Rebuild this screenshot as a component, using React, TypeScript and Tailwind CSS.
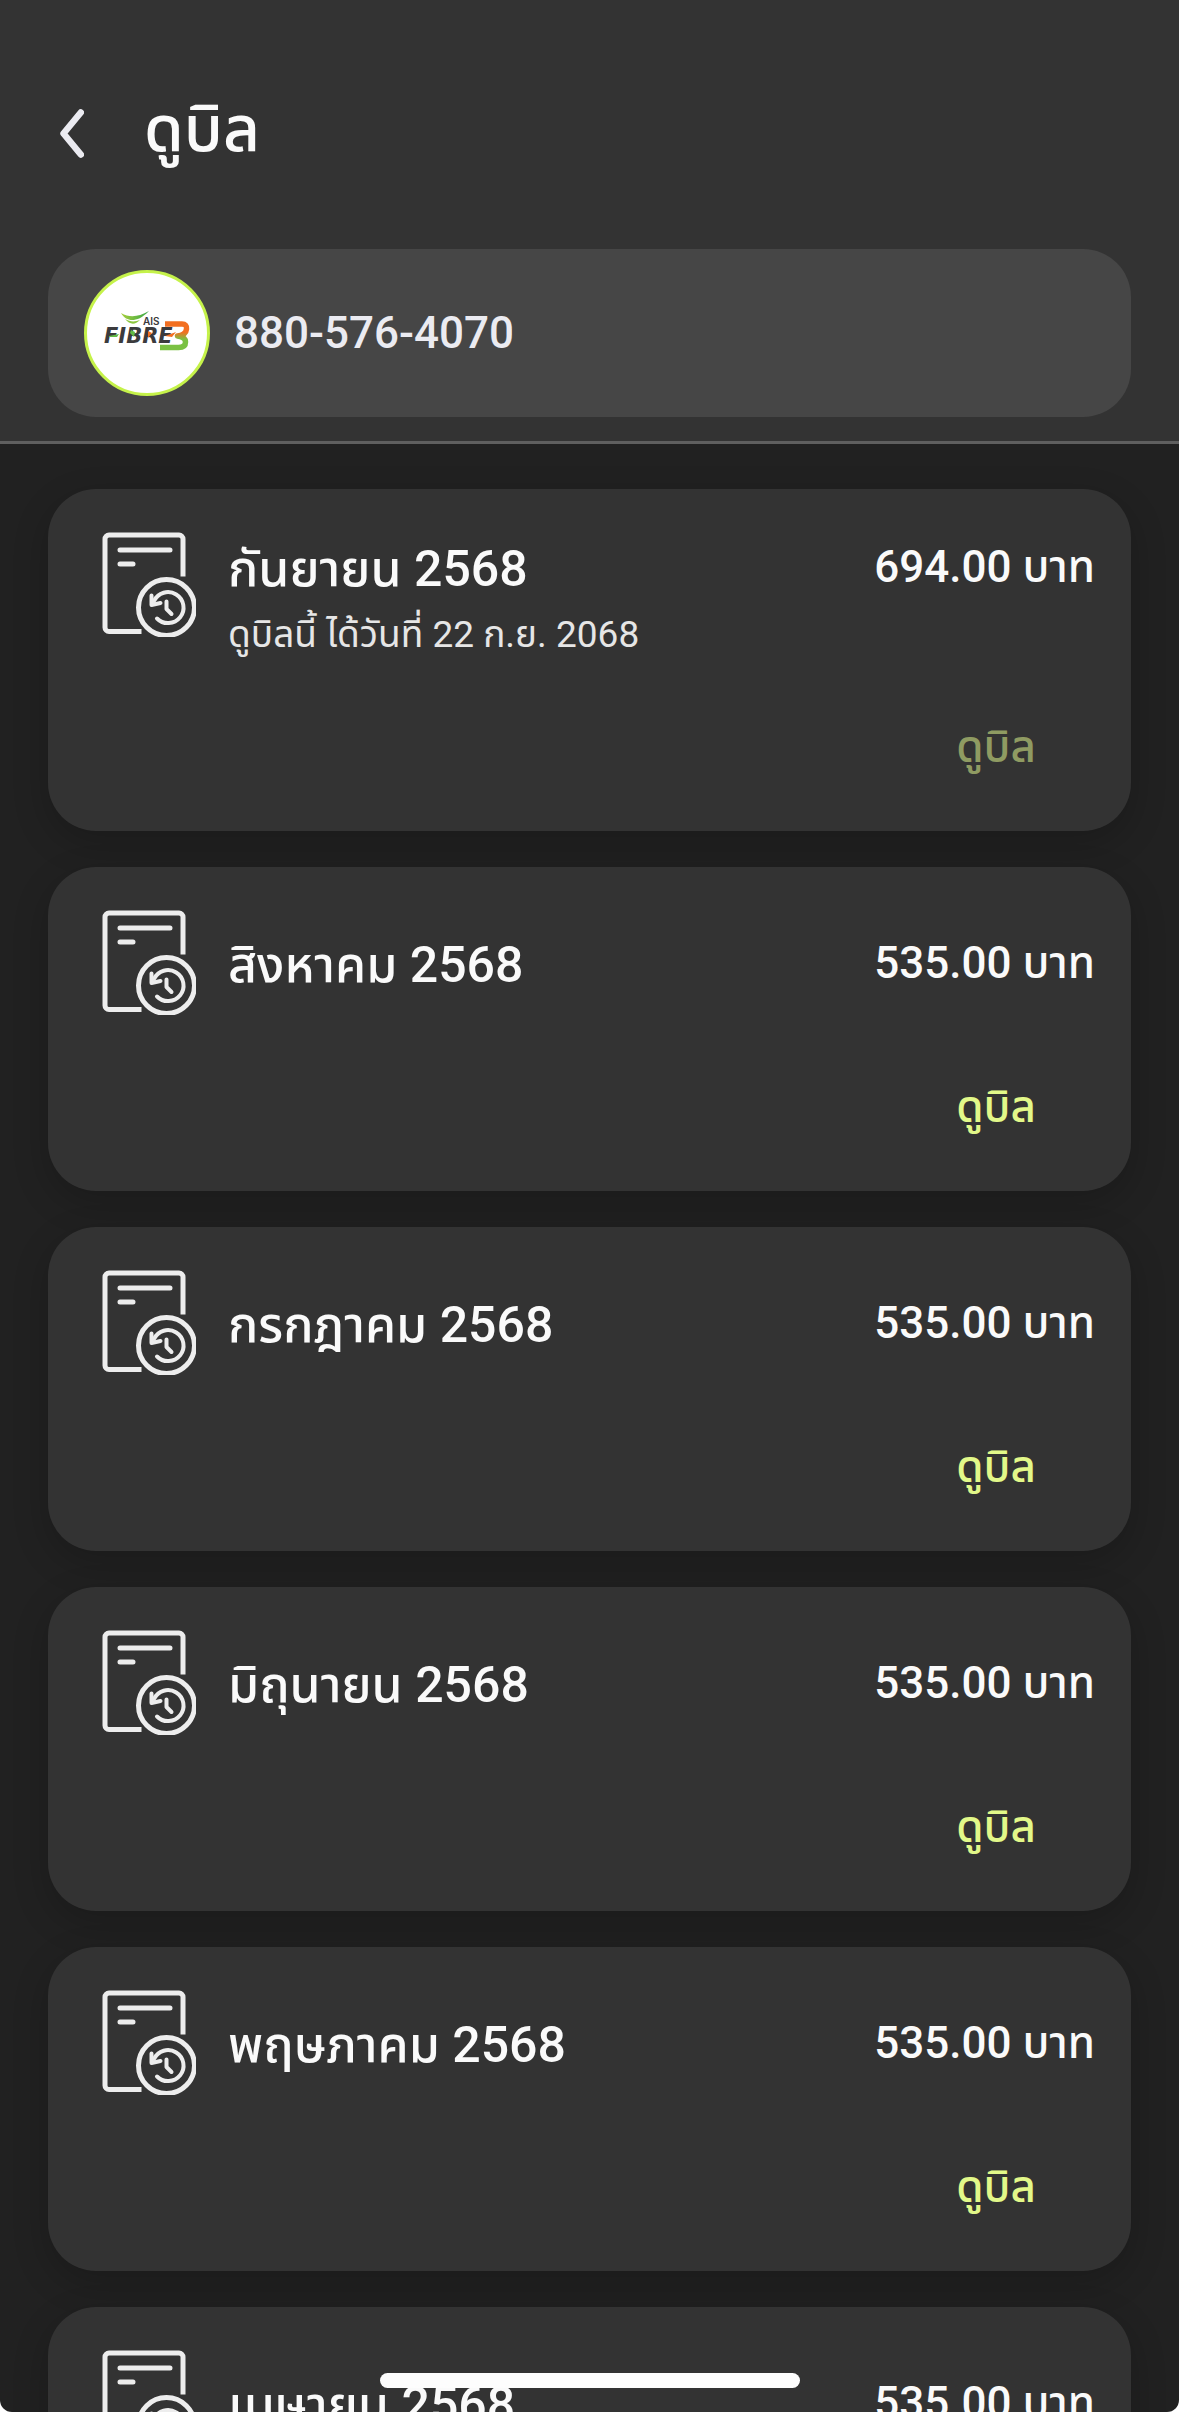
import React from "react"

interface Bill {
  id: string
  month: string
  amount: string
  note?: string
}

const BILLS: Bill[] = [
  { id: "2568-09", month: "กันยายน 2568", amount: "694.00", note: "ดูบิลนี้ ได้วันที่ 22 ก.ย. 2068" },
  { id: "2568-08", month: "สิงหาคม 2568", amount: "535.00" },
  { id: "2568-07", month: "กรกฎาคม 2568", amount: "535.00" },
  { id: "2568-06", month: "มิถุนายน 2568", amount: "535.00" },
  { id: "2568-05", month: "พฤษภาคม 2568", amount: "535.00" },
  { id: "2568-04", month: "เมษายน 2568", amount: "535.00" },
]

const BackIcon: React.FC = () => (
  <svg width="24" height="50" viewBox="0 0 24 50" fill="none" aria-hidden="true">
    <path d="M20.800 3.500 3.500 24.500 20.800 45.500" stroke="#ebebf1" strokeWidth="6.500" strokeLinecap="round" strokeLinejoin="round" />
  </svg>
)

const BillHistoryIcon: React.FC = () => (
  <svg
    className="shrink-0"
    width="96"
    height="108"
    viewBox="0 0 96 108"
    fill="none"
    stroke="#ededed"
    strokeWidth="5"
    aria-hidden="true"
  >
    {/* document */}
    <path d="M83 47.500V10a4 4 0 0 0-4-4H9a4 4 0 0 0-4 4v88.500a4 4 0 0 0 4 4h32.500" />
    <path d="M20 21h50M20 35h13" strokeLinecap="round" />
    {/* history badge */}
    <circle cx="66.500" cy="78.500" r="28" />
    <path d="M54 72a15.500 15.500 0 1 1 3 17.500" strokeWidth="4" strokeLinecap="round" />
    <path d="M51.500 66.500V76l9-2" strokeWidth="4" strokeLinecap="round" strokeLinejoin="round" />
    <path d="M66.500 72.500V80l5 5" strokeWidth="4" strokeLinecap="round" strokeLinejoin="round" />
  </svg>
)

const FibreLogo: React.FC = () => (
  <svg width="120" height="120" viewBox="0 0 120 120" role="img" aria-label="AIS Fibre3">
    <defs>
      <linearGradient id="three" x1="0" y1="0" x2="0" y2="1">
        <stop offset="0.350" stopColor="#f26f21" />
        <stop offset="0.650" stopColor="#7ac143" />
      </linearGradient>
      <linearGradient id="leaf" x1="0" y1="0" x2="1" y2="0">
        <stop offset="0" stopColor="#a6ce39" />
        <stop offset="1" stopColor="#39a849" />
      </linearGradient>
    </defs>
    <path d="M34 40c9 5 17 4 28-2-7 7-12 9-17 9-4 0-8-2-11-7Z" fill="url(#leaf)" />
    <path d="M38 46c5 3 10 3 15 1-5 5-10 5-15-1Z" fill="#8cc63f" />
    <text x="56" y="52" fill="#3b3b3d" fontFamily="Inter, sans-serif" fontSize="10" fontWeight="600">
      AIS
    </text>
    <path
      d="M78 51h17q5 0 4.500 5-.5 6-9 7 8 1 8 6 0 5.500-7 5.500H73"
      fill="none"
      stroke="url(#three)"
      strokeWidth="5.500"
      strokeLinejoin="round"
    />
    <text
      x="17"
      y="70"
      fill="#3b3b3d"
      fontFamily="'DejaVu Sans', sans-serif"
      fontSize="21"
      fontStyle="italic"
      fontWeight="700"
    >
      FIBRE
    </text>
    <path d="m22 63 10-2-2 3h-8ZM44 57l4 2-1 5-4-4Z" fill="#62bb46" />
    <path d="m61 58 4 2-4 5ZM78 63l11-4-4 5Z" fill="#f26f21" />
  </svg>
)

const BillCard: React.FC<{ bill: Bill }> = ({ bill }) => (
  <li className="flex flex-col rounded-[48px] bg-[#333333] pt-10 pr-9 pb-12 pl-[52px] shadow-[0_12px_36px_rgba(0,0,0,0.2)]">
    <div className="flex items-start gap-8">
      <BillHistoryIcon />
      <div className={bill.note ? "flex flex-1 justify-between pt-1" : "flex flex-1 justify-between pt-[22px]"}>
        <div>
          <h2 className="text-[50px] leading-[72px] font-medium text-[#fafafa]">{bill.month}</h2>
          {bill.note && <p className="text-[37px] leading-[60px] text-[#e6e6e6]">{bill.note}</p>}
        </div>
        <p className="text-[44px] leading-[68px] font-medium text-[#fafafa]">{bill.amount} บาท</p>
      </div>
    </div>
    <button
      type="button"
      disabled={Boolean(bill.note)}
      className={
        bill.note
          ? "mt-[46px] mr-[59px] self-end text-[44px] leading-[72px] font-medium text-[#8f9b62]"
          : "mt-14 mr-[59px] self-end text-[44px] leading-[72px] font-medium text-[#e2f889]"
      }
    >
      ดูบิล
    </button>
  </li>
)

export default function App() {
  return (
    <div className="h-screen bg-white">
      <div className="flex h-full flex-col overflow-hidden rounded-b-xl bg-[#212121] font-[Roboto,'Noto_Sans_Thai',sans-serif]">
        <header className="border-b-[3px] border-[#5f5f5f] bg-[#333333] px-12 pt-[90px] pb-6">
          <div className="flex items-center gap-[60px] pl-3">
            <button type="button" aria-label="ย้อนกลับ" className="pt-2">
              <BackIcon />
            </button>
            <h1 className="text-[64px] leading-[80px] font-medium text-[#fafafa]">ดูบิล</h1>
          </div>
          <div className="mt-[79px] flex items-center gap-6 rounded-[48px] bg-[#464646] px-9 py-[21px]">
            <div className="flex size-[126px] items-center justify-center rounded-full border-[3px] border-[#c5f24a] bg-white">
              <FibreLogo />
            </div>
            <span className="text-[44px] leading-[60px] font-medium text-[#ebebf1]">880-576-4070</span>
          </div>
        </header>

        <main className="flex-1 overflow-y-auto px-12 py-[45px] [scrollbar-width:none]">
          <ul className="flex flex-col gap-9">
            {BILLS.map((bill) => (
              <BillCard key={bill.id} bill={bill} />
            ))}
          </ul>
        </main>
      </div>

      {/* home indicator */}
      <div className="fixed bottom-6 left-1/2 h-[15px] w-[420px] -translate-x-1/2 rounded-full bg-[#fdfdfd]" />
    </div>
  )
}
